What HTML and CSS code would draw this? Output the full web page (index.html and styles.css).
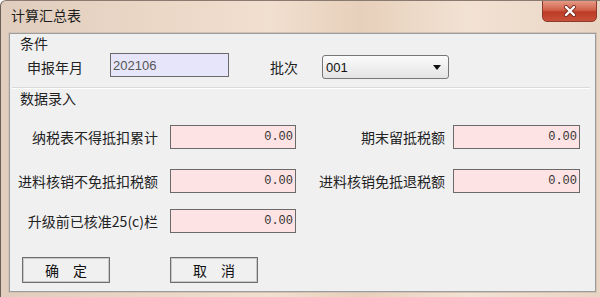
FILE: index.html
```html
<!DOCTYPE html>
<html lang="zh-CN">
<head>
  <meta charset="UTF-8">
  <meta name="viewport" content="width=device-width, initial-scale=1.0">
  <title>计算汇总表</title>
  <link rel="stylesheet" href="styles.css">
</head>
<body>
  <div class="window">
    <div class="titlebar">
      <span class="title">计算汇总表</span>
      <button class="close-btn" title="关闭">
        <svg width="14" height="12" viewBox="0 0 14 12">
          <path d="M3 2 L11 10 M11 2 L3 10" stroke="#7a2a20" stroke-width="4" stroke-linecap="round"/>
          <path d="M3 2 L11 10 M11 2 L3 10" stroke="#ffffff" stroke-width="2.4" stroke-linecap="round"/>
        </svg>
      </button>
    </div>

    <div class="panel">
      <div class="group-title">条件</div>
      <div class="cond-row">
        <label class="cond-label">申报年月</label>
        <input type="text" class="year-input" value="202106">
        <label class="batch-label">批次</label>
        <div class="select">
          <span>001</span>
          <span class="arrow"></span>
        </div>
      </div>

      <div class="group-line"></div>
      <div class="group-title">数据录入</div>

      <div class="data-row first">
        <label class="field-label">纳税表不得抵扣累计</label>
        <input type="text" class="num-input" value="0.00">
        <label class="field-label right">期末留抵税额</label>
        <input type="text" class="num-input wide" value="0.00">
      </div>
      <div class="data-row second">
        <label class="field-label">进料核销不免抵扣税额</label>
        <input type="text" class="num-input" value="0.00">
        <label class="field-label right">进料核销免抵退税额</label>
        <input type="text" class="num-input wide" value="0.00">
      </div>
      <div class="data-row third">
        <label class="field-label">升级前已核准25(c)栏</label>
        <input type="text" class="num-input" value="0.00">
      </div>

      <div class="actions">
        <button class="btn ok-btn">确　定</button>
        <button class="btn cancel-btn">取　消</button>
      </div>
    </div>
  </div>
</body>
</html>
```

FILE: styles.css
```css
body {
  margin: 0;
  background: #ffffff;
  font-family: "Noto Sans CJK SC", "Noto Sans", sans-serif;
  color: #222;
}
.window {
  width: 600px;
  height: 297px;
  box-sizing: border-box;
  border-left: 1px solid #6b5e56;
  border-top: 1px solid #8a7a70;
  border-radius: 6px 0 0 0;
  background: linear-gradient(90deg, #e0cdbd 0%, #ead7c6 25%, #f1dfcf 45%, #e7d0bb 60%, #f2e2d3 78%, #e9d5c4 100%);
  display: flex;
  flex-direction: column;
  overflow: hidden;
}
.titlebar {
  height: 32px;
  display: flex;
  justify-content: space-between;
  align-items: flex-start;
  padding-left: 10px;
}
.title {
  font-size: 14px;
  line-height: 16px;
  margin-top: 6px;
  color: #1e1e1e;
}
.close-btn {
  width: 55px;
  height: 22px;
  margin-top: -1px;
  margin-right: 3px;
  border: 1px solid #8c3a2c;
  border-radius: 0 0 5px 5px;
  background: linear-gradient(#e59a86 0%, #d2614a 45%, #bd3b26 55%, #c8503a 100%);
  display: flex;
  align-items: center;
  justify-content: center;
  padding: 0;
}
.panel {
  margin: 0 4px 5px 8px;
  flex: 1;
  background: #f0f0f1;
  border: 1px solid #9c9c9c;
  box-shadow: 0 0 0 1px #d3c3b6;
  display: flex;
  flex-direction: column;
}
.group-title {
  font-size: 14px;
  line-height: 16px;
  padding-left: 10px;
  margin-top: 1px;
  color: #222;
}
.cond-row {
  display: flex;
  align-items: flex-start;
  margin-top: 2px;
  height: 26px;
}
.cond-label {
  font-size: 14px;
  line-height: 24px;
  padding-left: 17px;
  width: 83px;
  margin-top: 2px;
}
.year-input {
  width: 119px;
  height: 24px;
  box-sizing: border-box;
  border: 1px solid #6a6a6a;
  background: #e7e5f9;
  font-family: "Liberation Sans", sans-serif;
  font-size: 13px;
  color: #555;
  padding: 0 2px;
}
.batch-label {
  font-size: 14px;
  line-height: 24px;
  margin-left: 41px;
  width: 52px;
  margin-top: 2px;
}
.select {
  width: 127px;
  height: 24px;
  box-sizing: border-box;
  margin-top: 2px;
  border: 1px solid #777;
  border-radius: 3px;
  background: linear-gradient(#fbfbfb, #e4e4e4);
  display: flex;
  align-items: center;
  justify-content: space-between;
  padding: 0 7px 0 3px;
  font-family: "Liberation Sans", sans-serif;
  font-size: 13px;
  color: #111;
}
.arrow {
  width: 0;
  height: 0;
  border-left: 4px solid transparent;
  border-right: 4px solid transparent;
  border-top: 5px solid #111;
}
.group-line {
  margin: 8px 5px 0 2px;
  height: 1px;
  background: #dadada;
  border-bottom: 1px solid #ffffff;
}
.data-row {
  display: flex;
  align-items: center;
  height: 24px;
}
.data-row.first { margin-top: 19px; }
.data-row.second { margin-top: 20px; }
.data-row.third { margin-top: 16px; }
.field-label {
  width: 160px;
  box-sizing: border-box;
  padding-right: 12px;
  text-align: right;
  font-size: 14px;
  white-space: nowrap;
}
.field-label.right {
  width: 157px;
  padding-right: 8px;
}
.num-input {
  width: 126px;
  height: 24px;
  box-sizing: border-box;
  border: 1px solid #6a6a6a;
  background: #fde3e3;
  text-align: right;
  font-family: "Liberation Mono", monospace;
  font-size: 12px;
  color: #333;
  padding: 0 2px;
}
.num-input.wide {
  width: 127px;
}
.actions {
  display: flex;
  margin-top: 24px;
  padding-left: 12px;
}
.btn {
  width: 88px;
  height: 26px;
  box-sizing: border-box;
  border: 1px solid #6e6e6e;
  box-shadow: inset 0 0 0 1px #c9c9c9;
  background: #f0f0f0;
  font-family: "Noto Sans CJK SC", sans-serif;
  font-size: 14px;
  color: #111;
  padding: 0;
}
.cancel-btn {
  margin-left: 60px;
}
```
